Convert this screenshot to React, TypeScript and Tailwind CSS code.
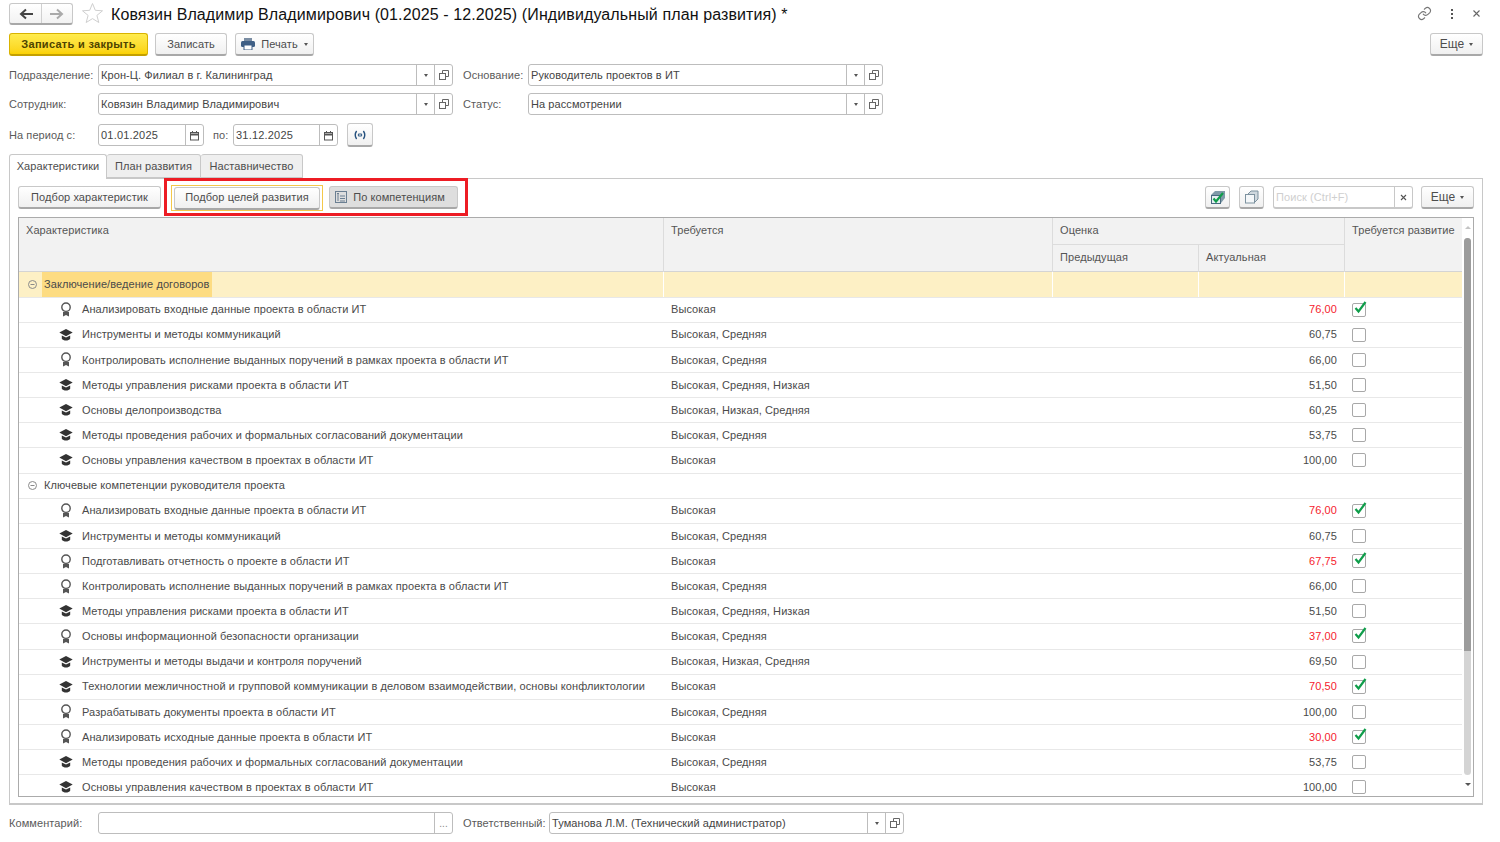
import React from "react";

const font = "font-['Liberation_Sans',Arial,sans-serif]";

function Btn({ className = "", children }: { className?: string; children?: React.ReactNode }) {
  return (
    <div className={"flex items-center justify-center rounded-[3px] border border-[#c8c8c8] border-b-[2px] border-b-[#a8a8a8] bg-gradient-to-b from-white to-[#f0f0f0] text-[11px] text-[#4d4d4d] " + className}>
      {children}
    </div>
  );
}

function Caret({ className = "" }: { className?: string }) {
  return <span className={"inline-block h-0 w-0 border-x-[2.5px] border-t-[3px] border-x-transparent border-t-[#555] " + className} />;
}

function OpenIcon() {
  return (
    <svg width="10" height="10" viewBox="0 0 10 10" fill="none" stroke="#666" strokeWidth="1">
      <path d="M3.5 3V.5h6v6H7" />
      <rect x=".5" y="3.5" width="6" height="6" fill="#fff" />
    </svg>
  );
}

function CalIcon() {
  return (
    <svg width="11" height="11" viewBox="0 0 11 11" fill="none" stroke="#555" strokeWidth="1">
      <rect x="1.5" y="2.5" width="8" height="7.5" />
      <path d="M1.5 4.5h8" strokeWidth="2" />
      <path d="M3.5 1v2M7.5 1v2" />
    </svg>
  );
}

function Field({ value, className = "" }: { value: string; className?: string }) {
  return (
    <div className={"flex h-[22px] items-stretch rounded-[3px] border border-[#bdbdbd] bg-white " + className}>
      <div className="flex-1 truncate pl-[2px] leading-[20px] text-[11px] text-[#444]">{value}</div>
      <div className="flex w-[18px] items-center justify-center border-l border-[#bdbdbd]"><Caret /></div>
      <div className="flex w-[18px] items-center justify-center border-l border-[#bdbdbd]"><OpenIcon /></div>
    </div>
  );
}

function DateField({ value, className = "" }: { value: string; className?: string }) {
  return (
    <div className={"flex h-[22px] items-stretch rounded-[3px] border border-[#bdbdbd] bg-white " + className}>
      <div className="flex-1 pl-[2px] leading-[20px] text-[11px] tracking-[0.2px] text-[#444]">{value}</div>
      <div className="flex w-[18px] items-center justify-center border-l border-[#bdbdbd]"><CalIcon /></div>
    </div>
  );
}

function Medal() {
  return (
    <svg width="12" height="15" viewBox="0 0 12 15" fill="none">
      <circle cx="6" cy="5.2" r="4.2" stroke="#555" strokeWidth="1.4" />
      <path d="M3 10v4.5l3-1.5 3 1.5V10" fill="#555" />
    </svg>
  );
}

function Cap() {
  return (
    <svg width="14" height="14" viewBox="0 0 14 14">
      <path d="M7 1L.3 4.6 7 8.2l6.7-3.6z" fill="#333" />
      <path d="M2.8 7.4v3.4c1.4 2.4 7 2.4 8.4 0V7.4L7 9.6z" fill="#333" />
    </svg>
  );
}

function Check({ on }: { on: boolean }) {
  return (
    <div className="relative h-[14px] w-[14px] rounded-[2px] border border-[#a8a8a8] bg-white">
      {on && (
        <svg className="absolute left-[0px] top-[-4px]" width="15" height="15" viewBox="0 0 15 15" fill="none">
          <path d="M2.5 8l3 3.5L12.5 2" stroke="#0f9d4a" strokeWidth="2.2" />
        </svg>
      )}
    </div>
  );
}

type Row = { n: string; r: string; v: string; m?: boolean; c?: boolean };

const Y = "Высокая";
const YS = "Высокая, Средняя";
const YSN = "Высокая, Средняя, Низкая";
const YNS = "Высокая, Низкая, Средняя";

const g1: Row[] = [
  { n: "Анализировать входные данные проекта в области ИТ", r: Y, v: "76,00", m: true, c: true },
  { n: "Инструменты и методы коммуникаций", r: YS, v: "60,75" },
  { n: "Контролировать исполнение выданных поручений в рамках проекта в области ИТ", r: YS, v: "66,00", m: true },
  { n: "Методы управления рисками проекта в области ИТ", r: YSN, v: "51,50" },
  { n: "Основы делопроизводства", r: YNS, v: "60,25" },
  { n: "Методы проведения рабочих и формальных согласований документации", r: YS, v: "53,75" },
  { n: "Основы управления качеством в проектах в области ИТ", r: Y, v: "100,00" },
];
const g2: Row[] = [
  { n: "Анализировать входные данные проекта в области ИТ", r: Y, v: "76,00", m: true, c: true },
  { n: "Инструменты и методы коммуникаций", r: YS, v: "60,75" },
  { n: "Подготавливать отчетность о проекте в области ИТ", r: Y, v: "67,75", m: true, c: true },
  { n: "Контролировать исполнение выданных поручений в рамках проекта в области ИТ", r: YS, v: "66,00", m: true },
  { n: "Методы управления рисками проекта в области ИТ", r: YSN, v: "51,50" },
  { n: "Основы информационной безопасности организации", r: YS, v: "37,00", m: true, c: true },
  { n: "Инструменты и методы выдачи и контроля поручений", r: YNS, v: "69,50" },
  { n: "Технологии межличностной и групповой коммуникации в деловом взаимодействии, основы конфликтологии", r: Y, v: "70,50", c: true },
  { n: "Разрабатывать документы проекта в области ИТ", r: YS, v: "100,00", m: true },
  { n: "Анализировать исходные данные проекта в области ИТ", r: Y, v: "30,00", m: true, c: true },
  { n: "Методы проведения рабочих и формальных согласований документации", r: YS, v: "53,75" },
  { n: "Основы управления качеством в проектах в области ИТ", r: Y, v: "100,00" },
];

const cols = "grid grid-cols-[645px_389px_146px_146px_117px]";

function DataRow({ row }: { row: Row }) {
  return (
    <div className={cols + " h-[25.15px] shrink-0 items-center border-b border-[#e8e8e8] text-[11px] text-[#4a4a4a]"}>
      <div className="flex items-center pl-[35px]">
        <span className="flex w-[28px] shrink-0 justify-center pr-[4px]">{row.m ? <Medal /> : <Cap />}</span>
        <span className="whitespace-nowrap">{row.n}</span>
      </div>
      <div className="pl-[7px]">{row.r}</div>
      <div />
      <div className={"pr-[8px] text-right " + (row.c ? "text-[#f5222d]" : "")}>{row.v}</div>
      <div className="pl-[7px]"><Check on={!!row.c} /></div>
    </div>
  );
}

function GroupRow({ title, active }: { title: string; active?: boolean }) {
  const minus = (
    <svg className="mx-[9px] shrink-0" width="9" height="9" viewBox="0 0 9 9" fill="none" stroke="#8a8a8a">
      <circle cx="4.5" cy="4.5" r="4" />
      <path d="M2.5 4.5h4" />
    </svg>
  );
  if (!active) {
    return (
      <div className="flex h-[25.15px] shrink-0 items-center border-b border-[#e8e8e8] text-[11px] text-[#4a4a4a]">
        <span className="flex w-[25px]">{minus}</span>
        <span>{title}</span>
      </div>
    );
  }
  return (
    <div className={cols + " h-[25.15px] shrink-0 items-stretch border-b border-[#e8e8e8] bg-[#fdf0c5] text-[11px] text-[#4a4a4a]"}>
      <div className="flex items-center border-r border-white">
        <span className="flex w-[23px]">{minus}</span>
        <span className="flex h-full items-center bg-[#fddc82] pl-[2px] pr-[3px]">{title}</span>
      </div>
      <div className="border-r border-white" />
      <div className="border-r border-white" />
      <div className="border-r border-white" />
      <div />
    </div>
  );
}

export default function App() {
  return (
    <div className={font + " relative h-[842px] w-[1500px] overflow-hidden bg-white tracking-[0.08px]"}>
      <div className="flex flex-col pl-[9px] pr-[17px]">
        {/* Title bar */}
        <div className="flex h-[33px] items-start pt-[3px]">
          <div className="flex h-[22px] w-[64px] rounded-[3px] border border-[#c8c8c8] border-b-[2px] border-b-[#a8a8a8] bg-gradient-to-b from-white to-[#f2f2f2]">
            <div className="flex w-[32px] items-center justify-center border-r border-[#d0d0d0]">
              <svg width="14" height="12" viewBox="0 0 14 12" fill="none" stroke="#444" strokeWidth="2"><path d="M14 6H3M7 1.5L2 6l5 4.5" /></svg>
            </div>
            <div className="flex flex-1 items-center justify-center">
              <svg width="14" height="12" viewBox="0 0 14 12" fill="none" stroke="#aaa" strokeWidth="2"><path d="M0 6h11M7 1.5L12 6l-5 4.5" /></svg>
            </div>
          </div>
          <svg className="ml-[9px] mt-[-1px]" width="21" height="22" viewBox="0 0 21 22" fill="none" stroke="#cfcfcf" strokeWidth="1">
            <path d="M10.5 1.5l2.8 6.8 7.2.5-5.6 4.6 1.9 7.1-6.3-3.9-6.3 3.9 1.9-7.1L.5 8.8l7.2-.5z" />
          </svg>
          <div className="ml-[8px] mt-[1px] text-[16px] leading-[22px] tracking-[0.11px] text-[#111]">
            Ковязин Владимир Владимирович (01.2025 - 12.2025) (Индивидуальный план развития) *
          </div>
          <div className="ml-auto flex items-center pt-[3px]">
            <svg className="mr-[5px]" width="15" height="15" viewBox="0 0 24 24" fill="none" stroke="#777" strokeWidth="1.8" strokeLinecap="round">
              <path d="M10 13a5 5 0 0 0 7.5.5l3-3a5 5 0 0 0-7-7l-1.7 1.7" />
              <path d="M14 11a5 5 0 0 0-7.5-.5l-3 3a5 5 0 0 0 7 7l1.7-1.7" />
            </svg>
            <div className="ml-[14px] flex flex-col gap-[2px]">
              <span className="h-[2px] w-[2px] bg-[#555]" />
              <span className="h-[2px] w-[2px] bg-[#555]" />
              <span className="h-[2px] w-[2px] bg-[#555]" />
            </div>
            <svg className="ml-[20px] mr-[3px]" width="7" height="7" viewBox="0 0 7 7" stroke="#666" strokeWidth="1.1"><path d="M.5.5l6 6M6.5.5l-6 6" /></svg>
          </div>
        </div>

        {/* Command bar */}
        <div className="flex h-[31px] items-start">
          <div className="flex h-[23px] w-[139px] items-center justify-center rounded-[3px] border border-[#d9b300] border-b-[2px] border-b-[#c4a000] bg-gradient-to-b from-[#ffec4d] to-[#fbd200] text-[11px] font-bold tracking-[0.3px] text-[#4d4300]">
            Записать и закрыть
          </div>
          <Btn className="ml-[7px] h-[23px] w-[72px]">Записать</Btn>
          <Btn className="ml-[8px] h-[23px] w-[79px] gap-[6px]">
            <svg width="14" height="12" viewBox="0 0 14 12">
              <rect x="3" y="0" width="8" height="3" fill="#7a8da3" />
              <rect x="0" y="3" width="14" height="6" rx="1.5" fill="#3f5f85" />
              <rect x="3" y="7" width="8" height="5" fill="#fff" stroke="#3f5f85" />
            </svg>
            <span>Печать</span>
            <Caret />
          </Btn>
          <Btn className="ml-auto h-[23px] w-[53px] gap-[5px] text-[12px]"><span>Еще</span><Caret /></Btn>
        </div>

        {/* Form rows */}
        <div className="flex h-[29px] items-start text-[11px] text-[#5a5a5a]">
          <div className="w-[89px] leading-[22px]">Подразделение:</div>
          <Field className="w-[355px]" value="Крон-Ц. Филиал в г. Калининград" />
          <div className="ml-[10px] w-[65px] leading-[22px]">Основание:</div>
          <Field className="w-[355px]" value="Руководитель проектов в ИТ" />
        </div>
        <div className="flex h-[31px] items-start text-[11px] text-[#5a5a5a]">
          <div className="w-[89px] leading-[22px]">Сотрудник:</div>
          <Field className="w-[355px]" value="Ковязин Владимир Владимирович" />
          <div className="ml-[10px] w-[65px] leading-[22px]">Статус:</div>
          <Field className="w-[355px]" value="На рассмотрении" />
        </div>
        <div className="flex h-[30px] items-start text-[11px] text-[#5a5a5a]">
          <div className="w-[89px] leading-[22px]">На период с:</div>
          <DateField className="w-[106px]" value="01.01.2025" />
          <div className="ml-[9px] w-[20px] leading-[22px]">по:</div>
          <DateField className="w-[105px]" value="31.12.2025" />
          <Btn className="ml-[9px] mt-[-1px] h-[24px] w-[26px]">
            <svg width="12" height="10" viewBox="0 0 12 10" fill="none" stroke="#24507e" strokeWidth="1.4">
              <path d="M2.6 1C.9 3.5.9 6.5 2.6 9M9.4 1c1.7 2.5 1.7 5.5 0 8" />
              <path d="M5.2 3.3L3.9 5l1.3 1.7zM6.8 3.3L8.1 5 6.8 6.7z" fill="#24507e" strokeWidth="0.5" />
            </svg>
          </Btn>
        </div>

        {/* Tabs */}
        <div className="relative z-10 flex h-[25px] items-stretch text-[11px] text-[#4d4d4d]">
          <div className="flex w-[98px] items-center justify-center rounded-t-[3px] border border-b-0 border-[#c8c8c8] bg-white pb-[1px]">Характеристики</div>
          <div className="flex h-[24px] w-[94px] items-center justify-center rounded-t-[3px] border border-l-0 border-[#c8c8c8] bg-[#efefef]">План развития</div>
          <div className="flex h-[24px] w-[102px] items-center justify-center rounded-t-[3px] border border-l-0 border-[#c8c8c8] bg-[#efefef]">Наставничество</div>
        </div>

        {/* Panel */}
        <div className="mt-[-1px] flex h-[627px] flex-col border border-b-[2px] border-[#c8c8c8] px-[8px] pt-[7px]">
          <div className="flex h-[31px] items-start">
            <Btn className="h-[23px] w-[143px]">Подбор характеристик</Btn>
            <div className="ml-[10px] mt-[-1px] flex h-[26px] w-[152px] items-center justify-center border border-[#f4c84a]">
              <Btn className="h-[23px] w-[146px]">Подбор целей развития</Btn>
            </div>
            <Btn className="ml-[6px] h-[23px] w-[129px] gap-[6px] border-[#b4b4b4] bg-none bg-[#dedede] pr-[7px]">
              <svg width="12" height="12" viewBox="0 0 12 12" fill="none" stroke="#6b7f92">
                <rect x=".5" y=".5" width="11" height="11" />
                <path d="M2 2.5h2M5 5h5M5 7.5h5M5 10h5M3 3v7" />
              </svg>
              <span>По компетенциям</span>
            </Btn>
            <Btn className="ml-auto h-[23px] w-[25px]">
              <svg width="16" height="15" viewBox="0 0 16 15">
                <path d="M1 5l4-4h10v7l-4 5H1z" fill="#7f9aa8" />
                <rect x="1.5" y="5.5" width="9" height="8" fill="#e6eef2" stroke="#486a80" />
                <path d="M3.5 8.5l2.5 3L13 3" fill="none" stroke="#0f9d4a" strokeWidth="2.2" />
              </svg>
            </Btn>
            <Btn className="ml-[9px] h-[23px] w-[25px]">
              <svg width="15" height="14" viewBox="0 0 15 14" fill="none" stroke="#7d929f">
                <path d="M4 4l3-3h7v8l-3 3" fill="#cfd8de" />
                <rect x="1.5" y="4.5" width="9" height="8.5" fill="#f4f7f9" />
              </svg>
            </Btn>
            <div className="ml-[9px] flex h-[23px] w-[140px] rounded-[3px] border border-[#c8c8c8] border-b-[2px] bg-white text-[11px] text-[#cfcfcf]">
              <div className="flex-1 pl-[2px] leading-[20px]">Поиск (Ctrl+F)</div>
              <div className="flex w-[18px] items-center justify-center border-l border-[#c8c8c8]">
                <svg width="7" height="7" viewBox="0 0 7 7" stroke="#555" strokeWidth="1.1"><path d="M1 1l5 5M6 1l-5 5" /></svg>
              </div>
            </div>
            <Btn className="ml-[8px] h-[23px] w-[53px] gap-[5px] text-[12px]"><span>Еще</span><Caret /></Btn>
          </div>

          {/* Table */}
          <div className="flex h-[580px] overflow-hidden border border-[#ababab]">
            <div className="flex w-[1443px] shrink-0 flex-col overflow-hidden">
              <div className={cols + " h-[54.4px] shrink-0 grid-rows-[27px_27px] border-b border-[#d4d4d4] bg-[#f2f2f2] text-[11px] text-[#555]"}>
                <div className="row-span-2 border-r border-[#dcdcdc] pl-[7px] pt-[4px]">Характеристика</div>
                <div className="row-span-2 border-r border-[#dcdcdc] pl-[7px] pt-[4px]">Требуется</div>
                <div className="col-span-2 border-b border-r border-[#dcdcdc] pl-[7px] pt-[4px]">Оценка</div>
                <div className="row-span-2 pl-[7px] pt-[4px]">Требуется развитие</div>
                <div className="border-r border-[#dcdcdc] pl-[7px] pt-[4px]">Предыдущая</div>
                <div className="border-r border-[#dcdcdc] pl-[7px] pt-[4px]">Актуальная</div>
              </div>
              <GroupRow title="Заключение/ведение договоров" active />
              {g1.map((r, i) => <DataRow key={i} row={r} />)}
              <GroupRow title="Ключевые компетенции руководителя проекта" />
              {g2.map((r, i) => <DataRow key={i} row={r} />)}
            </div>
            <div className="flex flex-1 flex-col items-center bg-white pt-[8px]">
              <span className="h-0 w-0 border-x-[3px] border-b-[3px] border-x-transparent border-b-[#c4c4c4]" />
              <div className="mt-[9px] flex h-[537px] w-[7px] flex-col overflow-hidden rounded-full bg-[#d4d4d4]">
                <div className="h-[413px] bg-[#9c9c9c]" />
              </div>
              <span className="mt-[8px] h-0 w-0 border-x-[3px] border-t-[3px] border-x-transparent border-t-[#555]" />
            </div>
          </div>
        </div>

        {/* Footer */}
        <div className="mt-[7px] flex items-start text-[11px] text-[#5a5a5a]">
          <div className="w-[89px] leading-[22px]">Комментарий:</div>
          <div className="flex h-[22px] w-[355px] rounded-[3px] border border-[#bdbdbd] bg-white">
            <div className="flex-1" />
            <div className="flex w-[18px] items-center justify-center border-l border-[#bdbdbd] text-[10px] text-[#888]">...</div>
          </div>
          <div className="ml-[10px] w-[86px] leading-[22px]">Ответственный:</div>
          <Field className="w-[355px]" value="Туманова Л.М. (Технический администратор)" />
        </div>
      </div>

      {/* Annotation frame */}
      <div className="absolute left-[164px] top-[178px] h-[38px] w-[304px] border-[3px] border-[#ed1c24]" />
    </div>
  );
}
